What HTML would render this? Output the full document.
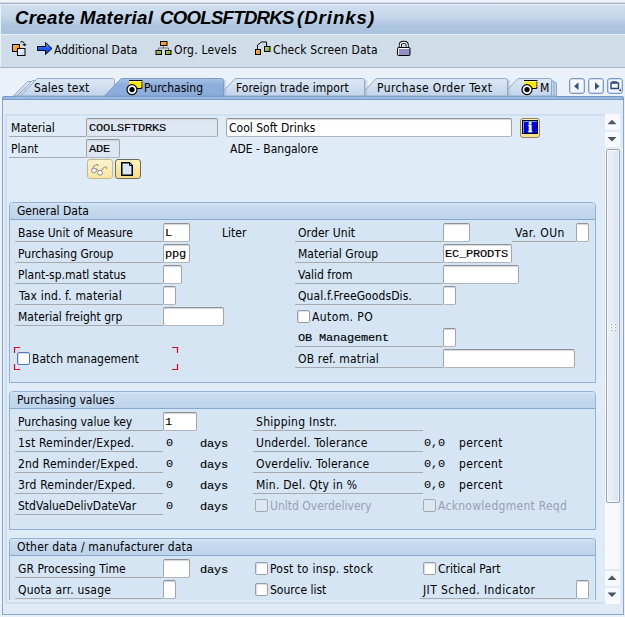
<!DOCTYPE html>
<html><head><meta charset="utf-8"><title>Create Material COOLSFTDRKS (Drinks)</title>
<style>
*{box-sizing:border-box}
html,body{margin:0;padding:0}
body{width:625px;height:617px;overflow:hidden;position:relative;background:#ebf1f8;font:12px "DejaVu Sans Condensed","Liberation Sans",sans-serif;color:#000}
.a{position:absolute}
.t{position:absolute;white-space:pre;line-height:17px;height:17px}
.l{position:absolute;white-space:pre;line-height:17px;height:18px;padding-top:1px;border-bottom:1px solid #a7a9ad;padding-left:3px}
.f{position:absolute;height:19px;margin-top:-1px;padding-top:1px;background:#fff;border:1px solid #a2a5aa;border-top-color:#8e9196;border-bottom-color:#b2b5ba;border-radius:2px;box-shadow:inset 0 1px 1px #d4d6da;font:bold 12px "Liberation Mono",monospace;line-height:16px;padding-left:1px;white-space:pre;overflow:hidden}
.ro{background:#dde6f1}
.sf{font:12px "DejaVu Sans Condensed","Liberation Sans",sans-serif;line-height:16px}
.m{position:absolute;white-space:pre;font:bold 12px "Liberation Mono",monospace;line-height:16px}
.cb{position:absolute;width:13px;height:13px;background:#fff;border:1px solid #9a9ea6;border-radius:2px;box-shadow:inset 1px 1px 1px #d9dde3}
.cbd{border-color:#a6a8ac;background:#dde7f2;box-shadow:none}
.cbf{border-color:#4f7cbc}
.grp{position:absolute;background:#d5e5f4;border:1px solid #93b1d6;border-radius:4px 4px 0 0;overflow:hidden}
.gh{position:absolute;left:0;top:0;right:0;height:17px;background:linear-gradient(#d9e7f4,#cbddf0 12%,#bcd3ea);border-bottom:1px solid #86a7cf;line-height:16px;padding-left:7px;white-space:pre}
.dis{color:#9b9db5}
.mn{-webkit-text-stroke:0 !important}
.ms{display:inline-block;letter-spacing:-.2px;font-weight:normal;-webkit-text-stroke:.15px #000;transform:scaleY(.86);transform-origin:50% 74%}
svg{position:absolute;overflow:visible}
</style></head><body>

<div class="a" style="left:0;top:0;width:625px;height:2px;background:#eef2f9"></div>
<div class="a" style="left:0;top:2px;width:625px;height:1px;background:#d9dee8"></div>
<div class="a" style="left:0;top:3px;width:625px;height:1px;background:#9db0c7"></div>
<div class="a" style="left:0;top:4px;width:625px;height:1px;background:#e6eef7"></div>
<div class="a" style="left:1px;top:5px;width:624px;height:29px;background:linear-gradient(#cfdfee,#c3d5e8 45%,#afc6e0 70%,#a9c2dd)"></div>
<div class="a" style="left:0;top:34px;width:625px;height:1px;background:#e8eff6"></div>
<div class="a" style="left:0;top:6px;width:400px;height:24px;font:italic bold 18.67px 'Liberation Sans',sans-serif;line-height:24px;white-space:pre"><span class="a" style="left:15px;letter-spacing:.3px">Create </span><span class="a" style="left:80px;letter-spacing:.35px">Material </span><span class="a" style="left:160px;letter-spacing:-.75px">COOLSFTDRKS </span><span class="a" style="left:297px;letter-spacing:.95px">(Drinks)</span></div>

<div class="a" style="left:1px;top:35px;width:624px;height:32px;background:#cfdde9"></div>
<div class="a" style="left:0;top:67px;width:625px;height:1px;background:#a5b5c9"></div>
<div class="t" style="left:54px;top:42px">Additional Data</div>
<div class="t" style="left:174px;top:42px;letter-spacing:.2px">Org. Levels</div>
<div class="t" style="left:273px;top:42px;letter-spacing:.1px">Check Screen Data</div>


<svg style="left:0;top:35px" width="625" height="32" viewBox="0 35 625 32">
<defs>
<linearGradient id="gbl" x1="0" y1="0" x2="0" y2="1"><stop offset="0" stop-color="#6ab4ff"/><stop offset=".45" stop-color="#1e5cff"/><stop offset="1" stop-color="#0a2fd0"/></linearGradient>
<linearGradient id="gor" x1="0" y1="0" x2="1" y2="1"><stop offset="0" stop-color="#ffc050"/><stop offset="1" stop-color="#f08000"/></linearGradient>
<linearGradient id="ggr" x1="0" y1="0" x2="1" y2="1"><stop offset="0" stop-color="#c8e070"/><stop offset="1" stop-color="#6a9a20"/></linearGradient>
<linearGradient id="gwh" x1="0" y1="0" x2="1" y2="1"><stop offset="0" stop-color="#ffffff"/><stop offset="1" stop-color="#c0d0f0"/></linearGradient>
</defs>
<!-- icon1 -->
<rect x="12.5" y="44.5" width="7" height="7" fill="url(#gor)" stroke="#000"/>
<rect x="17.5" y="48.5" width="7.5" height="7" fill="url(#gwh)" stroke="#000"/>
<path d="M20.5 42 Q24.5 40.5 24.5 45.5 M22.7 44 L24.5 46 L26.3 44" fill="none" stroke="#000" stroke-width="1"/>
<!-- arrow -->
<path d="M37.5 46.5 H45.5 V42.5 L52 48.5 L45.5 54.5 V50.5 H37.5Z" fill="url(#gbl)" stroke="#000" stroke-width="1" stroke-linejoin="miter"/>
<!-- org -->
<path d="M163.5 46 V48 M158.5 50 V48 H168.5 V50" fill="none" stroke="#707070" stroke-width="1"/>
<rect x="160.5" y="41.500" width="6.5" height="4" fill="url(#gor)" stroke="#000"/>
<rect x="156" y="50.500" width="5.500" height="4" fill="url(#ggr)" stroke="#000"/>
<rect x="165.500" y="50.500" width="5.500" height="4" fill="url(#ggr)" stroke="#000"/>
<!-- check -->
<path d="M257.5 49 V45 L261.5 42 H266.5 V46" fill="none" stroke="#000" stroke-width="1"/>
<rect x="255.500" y="49.500" width="5" height="5" fill="url(#gor)" stroke="#000"/>
<rect x="264.500" y="46.500" width="5.500" height="5" fill="url(#ggr)" stroke="#000"/>
<!-- lock -->
<path d="M400.300 47 V45 Q400.300 42.300 403.700 42.300 Q407.200 42.300 407.200 45 V47" fill="none" stroke="#000" stroke-width="3"/>
<path d="M400.300 47.500 V45 Q400.300 42.300 403.700 42.300 Q407.200 42.300 407.200 45 V47.500" fill="none" stroke="#fff" stroke-width="1.300"/>
<rect x="397.500" y="47.500" width="12.500" height="8" rx="1" fill="#9090c8" stroke="#000"/>
<path d="M398.500 54.500 V48.500 H409" fill="none" stroke="#fff" stroke-width="1"/>
</svg>

<div class="a" style="left:2px;top:96px;width:622px;height:519px;background:#e0ebf6;border:1px solid #86a6d0;border-top:none;border-radius:3px 3px 0 0"></div>
<div class="a" style="left:2px;top:96px;width:622px;height:4px;background:#9cbae0;border-top:1px solid #7296c8;border-bottom:1px solid #789bca;border-left:1px solid #7296c8;border-right:1px solid #7296c8;border-radius:3px 3px 0 0"></div>
<div class="a" style="left:5px;top:114px;width:600px;height:490px;background:#dfebf6;border:2px solid #cedff0;border-right:none"></div>

<svg style="left:0;top:70px" width="625" height="32" viewBox="0 70 625 32"><defs><linearGradient id="tin" x1="0" y1="0" x2="0" y2="1"><stop offset="0" stop-color="#dde8f4"/><stop offset="1" stop-color="#c2d4ea"/></linearGradient>
<linearGradient id="tac" x1="0" y1="0" x2="0" y2="1"><stop offset="0" stop-color="#a9c3e5"/><stop offset=".35" stop-color="#8eaedb"/><stop offset="1" stop-color="#8cacd9"/></linearGradient>
<linearGradient id="sh" x1="0" y1="0" x2="1" y2="0"><stop offset="0" stop-color="#8fa3bd" stop-opacity=".55"/><stop offset="1" stop-color="#8fa3bd" stop-opacity="0"/></linearGradient></defs><path d="M13.500 96 L27.500 81.500 H34 V96Z" fill="url(#tin)" stroke="#8eaacb"/><path d="M17 96 L32.500 80.500 H38 V96Z" fill="url(#tin)" stroke="#8eaacb"/><path d="M551 82 H554.500 Q556.500 82 556.500 84 V96 H551Z" fill="#c3d5e9" stroke="#8eaacb"/><path d="M550 80.500 H552 Q554 80.500 554 82.500 V96 H550Z" fill="#c3d5e9" stroke="#8eaacb"/><path d="M501.5 96 L518.125 78.5 H549.5 Q551.5 78.5 551.5 80.5 V96Z" fill="url(#tin)" stroke="#8eaacb" stroke-width="1"/><rect x="508" y="80" width="3" height="16" fill="url(#sh)"/><path d="M359.5 96 L376.125 78.5 H505.5 Q507.5 78.5 507.5 80.5 V96Z" fill="url(#tin)" stroke="#8eaacb" stroke-width="1"/><rect x="365" y="80" width="3" height="16" fill="url(#sh)"/><path d="M218.5 96 L235.125 78.5 H362.5 Q364.5 78.5 364.5 80.5 V96Z" fill="url(#tin)" stroke="#8eaacb" stroke-width="1"/><path d="M20.5 96 L37.125 78.5 H112.5 Q114.5 78.5 114.5 80.5 V96Z" fill="url(#tin)" stroke="#8eaacb" stroke-width="1"/><rect x="224" y="80" width="3" height="16" fill="url(#sh)"/><path d="M104.5 96 L121.125 78.5 H221.5 Q223.5 78.5 223.5 80.5 V96Z" fill="url(#tac)" stroke="#7c9cc8" stroke-width="1"/></svg><div class="a" style="left:569px;top:78px;width:16px;height:16px;border:1px solid #7a9bc6;border-radius:3px;background:linear-gradient(#fbfcfe,#eef2f8);box-shadow:inset 0 0 0 .5px #a9c0dc"></div><div class="a" style="left:588px;top:78px;width:16px;height:16px;border:1px solid #7a9bc6;border-radius:3px;background:linear-gradient(#fbfcfe,#eef2f8);box-shadow:inset 0 0 0 .5px #a9c0dc"></div><div class="a" style="left:607px;top:78px;width:16px;height:16px;border:1px solid #7a9bc6;border-radius:3px;background:linear-gradient(#fbfcfe,#eef2f8);box-shadow:inset 0 0 0 .5px #a9c0dc"></div><svg style="left:565px;top:75px" width="60" height="22" viewBox="565 75 60 22">
<path d="M578.500 82.300 V90 L574 86.150Z M595 82.300 V90 L599.500 86.150Z" fill="#34537f"/>
<path d="M611 83 H618.500 V88.500 H611Z" fill="none" stroke="#2b4a78" stroke-width="1.400"/>
<path d="M611.500 82 H617" fill="none" stroke="#2b4a78" stroke-width="1.600"/>
<path d="M618.500 91 H621 V88.500Z" fill="#2b4a78"/>
</svg><svg style="left:123.5px;top:76px" width="22" height="22" viewBox="123.5 76 22 22">
<rect x="128.7" y="80.500" width="12.600" height="7.500" fill="#ffe800"/>
<rect x="128.7" y="81" width="12.600" height="1" fill="#fff59a"/>
<path d="M128.5 80.500 H141.3 M135.5 88.500 H141.3" stroke="#000" stroke-width="1" fill="none"/>
<path d="M141.3 80 V89" stroke="#000" stroke-width="1.200" stroke-dasharray="1.300 .900" fill="none"/>
<circle cx="131.5" cy="89.600" r="5" fill="#fff" stroke="#000" stroke-width="1.200"/>
<circle cx="131.5" cy="89.600" r="2.600" fill="#000"/></svg><svg style="left:519px;top:76px" width="22" height="22" viewBox="519 76 22 22">
<rect x="524.2" y="80.500" width="12.600" height="7.500" fill="#ffe800"/>
<rect x="524.2" y="81" width="12.600" height="1" fill="#fff59a"/>
<path d="M524 80.500 H536.8 M531 88.500 H536.8" stroke="#000" stroke-width="1" fill="none"/>
<path d="M536.8 80 V89" stroke="#000" stroke-width="1.200" stroke-dasharray="1.300 .900" fill="none"/>
<circle cx="527" cy="89.600" r="5" fill="#fff" stroke="#000" stroke-width="1.200"/>
<circle cx="527" cy="89.600" r="2.600" fill="#000"/></svg><div class="t" style="left:34px;top:80px;letter-spacing:0.2px">Sales text</div><div class="t" style="left:144px;top:80px;letter-spacing:0px">Purchasing</div><div class="t" style="left:236px;top:80px;letter-spacing:0.08px">Foreign trade import</div><div class="t" style="left:377px;top:80px;letter-spacing:0.38px">Purchase Order Text</div><div class="t" style="left:540px;top:80px;letter-spacing:0px">M</div>
<div class="a" style="left:605px;top:114px;width:15px;height:490px;background:#f7f9fc"></div>
<div class="a" style="left:606px;top:149px;width:14px;height:354px;border:1px solid #9aa3ae;background:linear-gradient(90deg,#ebf1f8,#e4ecf5 50%,#d6e2ee);border-radius:2px;box-shadow:inset 0 0 0 1px rgba(255,255,255,.7)"></div>
<svg style="left:605px;top:114px" width="15" height="490" viewBox="0 0 15 490">
<path d="M2.500 10.200 L7 5.700 L11.500 10.200Z M2.500 23 L7 27.500 L11.500 23Z M2.500 466 L7 461.500 L11.500 466Z M2.500 478.500 L7 483 L11.500 478.500Z" fill="#465766"/>
<rect x="0" y="16" width="15" height="2" fill="#dfebf6"/><rect x="0" y="33" width="15" height="2" fill="#dfebf6"/>
<rect x="0" y="455" width="15" height="2" fill="#dfebf6"/><rect x="0" y="472" width="15" height="2" fill="#dfebf6"/>
<g><rect x="5" y="209" width="2" height="2" fill="#fbfcfe"/><rect x="6" y="210" width="1" height="1" fill="#9ca7b5"/><rect x="5" y="212" width="2" height="2" fill="#fbfcfe"/><rect x="6" y="213" width="1" height="1" fill="#9ca7b5"/><rect x="5" y="215" width="2" height="2" fill="#fbfcfe"/><rect x="6" y="216" width="1" height="1" fill="#9ca7b5"/><rect x="9" y="209" width="2" height="2" fill="#fbfcfe"/><rect x="10" y="210" width="1" height="1" fill="#9ca7b5"/><rect x="9" y="212" width="2" height="2" fill="#fbfcfe"/><rect x="10" y="213" width="1" height="1" fill="#9ca7b5"/><rect x="9" y="215" width="2" height="2" fill="#fbfcfe"/><rect x="10" y="216" width="1" height="1" fill="#9ca7b5"/></g>
</svg>

<div class="l " style="left:9px;top:119px;width:77px;padding-left:2px">Material</div>
<div class="f ro" style="left:86px;top:119px;width:132px;padding-left:2px"><span class="ms">COOLSFTDRKS</span></div>
<div class="f sf" style="left:226px;top:119px;width:286px;padding-left:2px">Cool Soft Drinks</div>
<div class="l " style="left:9px;top:140px;width:77px;padding-left:2px">Plant</div>
<div class="f ro" style="left:86px;top:140px;width:34px;padding-left:2px"><span class="ms">ADE</span></div>
<div class="t " style="left:230px;top:141px;">ADE - Bangalore</div>

<div class="a" style="left:87px;top:159px;width:26px;height:20px;border:1px solid #c4b98c;border-radius:3px;background:linear-gradient(#fdf4cc,#f9e5a0)"></div>
<div class="a" style="left:115px;top:159px;width:26px;height:20px;border:1px solid #6f6a58;border-radius:3px;background:linear-gradient(#fdf1bd,#f7dc84)"></div>
<svg style="left:80px;top:155px" width="70" height="30" viewBox="80 155 70 30">
<g fill="none" stroke="#8c8c8c" stroke-width="1">
<circle cx="94" cy="170.500" r="2.400" fill="#fff"/><circle cx="100" cy="172.800" r="2.400" fill="#fff"/>
<path d="M96 169.200 Q97.500 168.500 98.500 170.800"/>
<path d="M92.300 168.800 Q93.500 165 97 164.300 Q98.800 164.600 97.800 166.300"/>
<path d="M101.500 170.600 Q102.500 167.300 105.800 166.800 Q107.500 167.200 106.500 169"/>
</g>
<path d="M121.750 162.750 H129.500 L132.250 165.500 V175.250 H121.750Z" fill="#d6e7f7" stroke="#000" stroke-width="1.500"/>
<path d="M129.500 162.750 V165.500 H132.250" fill="#7aa0c8" stroke="#000" stroke-width="1"/>
</svg>
<div class="a" style="left:520px;top:118px;width:20px;height:20px;border:1px solid #8a8468;border-radius:3px;background:linear-gradient(#fbefb0,#f6e08e)"></div>
<div class="a" style="left:522px;top:120px;width:16px;height:14px;border:1px solid #000;background:#0000e6;box-shadow:inset 1px 1px 0 #5aa0ff"></div>
<div class="a" style="left:523px;top:119px;width:14px;height:16px;color:#fff;font:bold 14.500px 'Liberation Serif',serif;line-height:16px;text-align:center;-webkit-text-stroke:.6px #fff">i</div>

<div class="grp" style="left:9px;top:202px;width:587px;height:181px"><div class="gh">General Data</div></div>
<div class="l " style="left:15px;top:224px;width:148px;">Base Unit of Measure</div>
<div class="f " style="left:163px;top:224px;width:27px;"><span class="ms">L</span></div>
<div class="t " style="left:222px;top:225px;">Liter</div>
<div class="l " style="left:15px;top:245px;width:148px;">Purchasing Group</div>
<div class="f " style="left:163px;top:245px;width:27px;padding-left:1px"><span class="ms">ppg</span></div>
<div class="l " style="left:15px;top:266px;width:148px;">Plant-sp.matl status</div>
<div class="f " style="left:163px;top:266px;width:19px;"></div>
<div class="l " style="left:15px;top:287px;width:148px;padding-left:4px;letter-spacing:0.17px;">Tax ind. f. material</div>
<div class="f " style="left:163px;top:287px;width:13px;"></div>
<div class="l " style="left:15px;top:308px;width:148px;">Material freight grp</div>
<div class="f " style="left:163px;top:308px;width:61px;"></div>
<div class="cb cbf" style="left:17px;top:352px"></div>
<div class="t " style="left:32px;top:351px;">Batch management</div>
<svg style="left:14px;top:347px" width="164" height="23" viewBox="0 0 164 23"><path d="M0.5 6V0.5H6 M0.5 17V22.5H6 M163.5 6V0.5H158 M163.5 17V22.5H158" fill="none" stroke="#e0001c" stroke-width="1.2"/></svg>
<div class="l " style="left:295px;top:224px;width:148px;letter-spacing:0.1px;">Order Unit</div>
<div class="f " style="left:443px;top:224px;width:27px;"></div>
<div class="l " style="left:512px;top:224px;width:64px;letter-spacing:0.4px;">Var. OUn</div>
<div class="f " style="left:576px;top:224px;width:13px;"></div>
<div class="l " style="left:295px;top:245px;width:148px;">Material Group</div>
<div class="f " style="left:443px;top:245px;width:69px;"><span class="ms">EC_PRODTS</span></div>
<div class="l " style="left:295px;top:266px;width:148px;">Valid from</div>
<div class="f " style="left:443px;top:266px;width:76px;"></div>
<div class="l " style="left:295px;top:287px;width:148px;letter-spacing:0.1px;">Qual.f.FreeGoodsDis.</div>
<div class="f " style="left:443px;top:287px;width:13px;"></div>
<div class="cb " style="left:297px;top:310px"></div>
<div class="t " style="left:312px;top:309px;letter-spacing:0.4px;">Autom. PO</div>
<div class="l" style="left:295px;top:329px;width:148px;font:bold 12px 'Liberation Mono',monospace;line-height:17px"><span class="ms">OB Management</span></div>
<div class="f " style="left:443px;top:329px;width:13px;"></div>
<div class="l " style="left:295px;top:350px;width:148px;letter-spacing:0.18px;">OB ref. matrial</div>
<div class="f " style="left:443px;top:350px;width:132px;"></div>
<div class="grp" style="left:9px;top:391px;width:587px;height:139px"><div class="gh">Purchasing values</div></div>
<div class="l " style="left:15px;top:413px;width:148px;">Purchasing value key</div>
<div class="f " style="left:163px;top:413px;width:34px;"><span class="ms">1</span></div>
<div class="l " style="left:15px;top:434px;width:148px;letter-spacing:0.2px;">1st Reminder/Exped.</div>
<div class="m" style="left:166px;top:435px"><span class="ms mn">0</span></div>
<div class="m" style="left:200px;top:436px"><span class="ms">days</span></div>
<div class="l " style="left:15px;top:455px;width:148px;letter-spacing:0.2px;">2nd Reminder/Exped.</div>
<div class="m" style="left:166px;top:456px"><span class="ms mn">0</span></div>
<div class="m" style="left:200px;top:457px"><span class="ms">days</span></div>
<div class="l " style="left:15px;top:476px;width:148px;letter-spacing:0.2px;">3rd Reminder/Exped.</div>
<div class="m" style="left:166px;top:477px"><span class="ms mn">0</span></div>
<div class="m" style="left:200px;top:478px"><span class="ms">days</span></div>
<div class="l " style="left:15px;top:497px;width:148px;">StdValueDelivDateVar</div>
<div class="m" style="left:166px;top:498px"><span class="ms mn">0</span></div>
<div class="m" style="left:200px;top:499px"><span class="ms">days</span></div>
<div class="l " style="left:253px;top:413px;width:170px;letter-spacing:0.27px;">Shipping Instr.</div>
<div class="l " style="left:253px;top:434px;width:170px;letter-spacing:0.24px;">Underdel. Tolerance</div>
<div class="m" style="left:424px;top:435px"><span class="ms mn">0,0</span></div>
<div class="t " style="left:459px;top:435px;letter-spacing:0.35px;">percent</div>
<div class="l " style="left:253px;top:455px;width:170px;letter-spacing:0.23px;">Overdeliv. Tolerance</div>
<div class="m" style="left:424px;top:456px"><span class="ms mn">0,0</span></div>
<div class="t " style="left:459px;top:456px;letter-spacing:0.35px;">percent</div>
<div class="l " style="left:253px;top:476px;width:170px;letter-spacing:0.24px;">Min. Del. Qty in %</div>
<div class="m" style="left:424px;top:477px"><span class="ms mn">0,0</span></div>
<div class="t " style="left:459px;top:477px;letter-spacing:0.35px;">percent</div>
<div class="cb cbd" style="left:255px;top:499px"></div>
<div class="t dis" style="left:270px;top:498px;">Unltd Overdelivery</div>
<div class="cb cbd" style="left:423px;top:499px"></div>
<div class="t dis" style="left:438px;top:498px;letter-spacing:0.27px;">Acknowledgment Reqd</div>
<div class="grp" style="left:9px;top:538px;width:587px;height:62px;border-bottom:none"><div class="gh" style="letter-spacing:.19px">Other data / manufacturer data</div></div>
<div class="l " style="left:15px;top:560px;width:148px;letter-spacing:0.06px;">GR Processing Time</div>
<div class="f " style="left:163px;top:560px;width:27px;"></div>
<div class="m" style="left:200px;top:562px"><span class="ms">days</span></div>
<div class="l " style="left:15px;top:581px;width:148px;letter-spacing:0.2px;">Quota arr. usage</div>
<div class="f " style="left:163px;top:581px;width:13px;"></div>
<div class="cb " style="left:255px;top:562px"></div>
<div class="t " style="left:270px;top:561px;letter-spacing:0.27px;">Post to insp. stock</div>
<div class="cb " style="left:255px;top:583px"></div>
<div class="t " style="left:270px;top:582px;">Source list</div>
<div class="cb " style="left:423px;top:562px"></div>
<div class="t " style="left:438px;top:561px;">Critical Part</div>
<div class="l " style="left:420px;top:581px;width:156px;letter-spacing:0.42px;">JIT Sched. Indicator</div>
<div class="f " style="left:576px;top:581px;width:13px;"></div>
<div class="a" style="left:7px;top:600px;width:598px;height:2px;background:#dfebf6"></div>
</body></html>
